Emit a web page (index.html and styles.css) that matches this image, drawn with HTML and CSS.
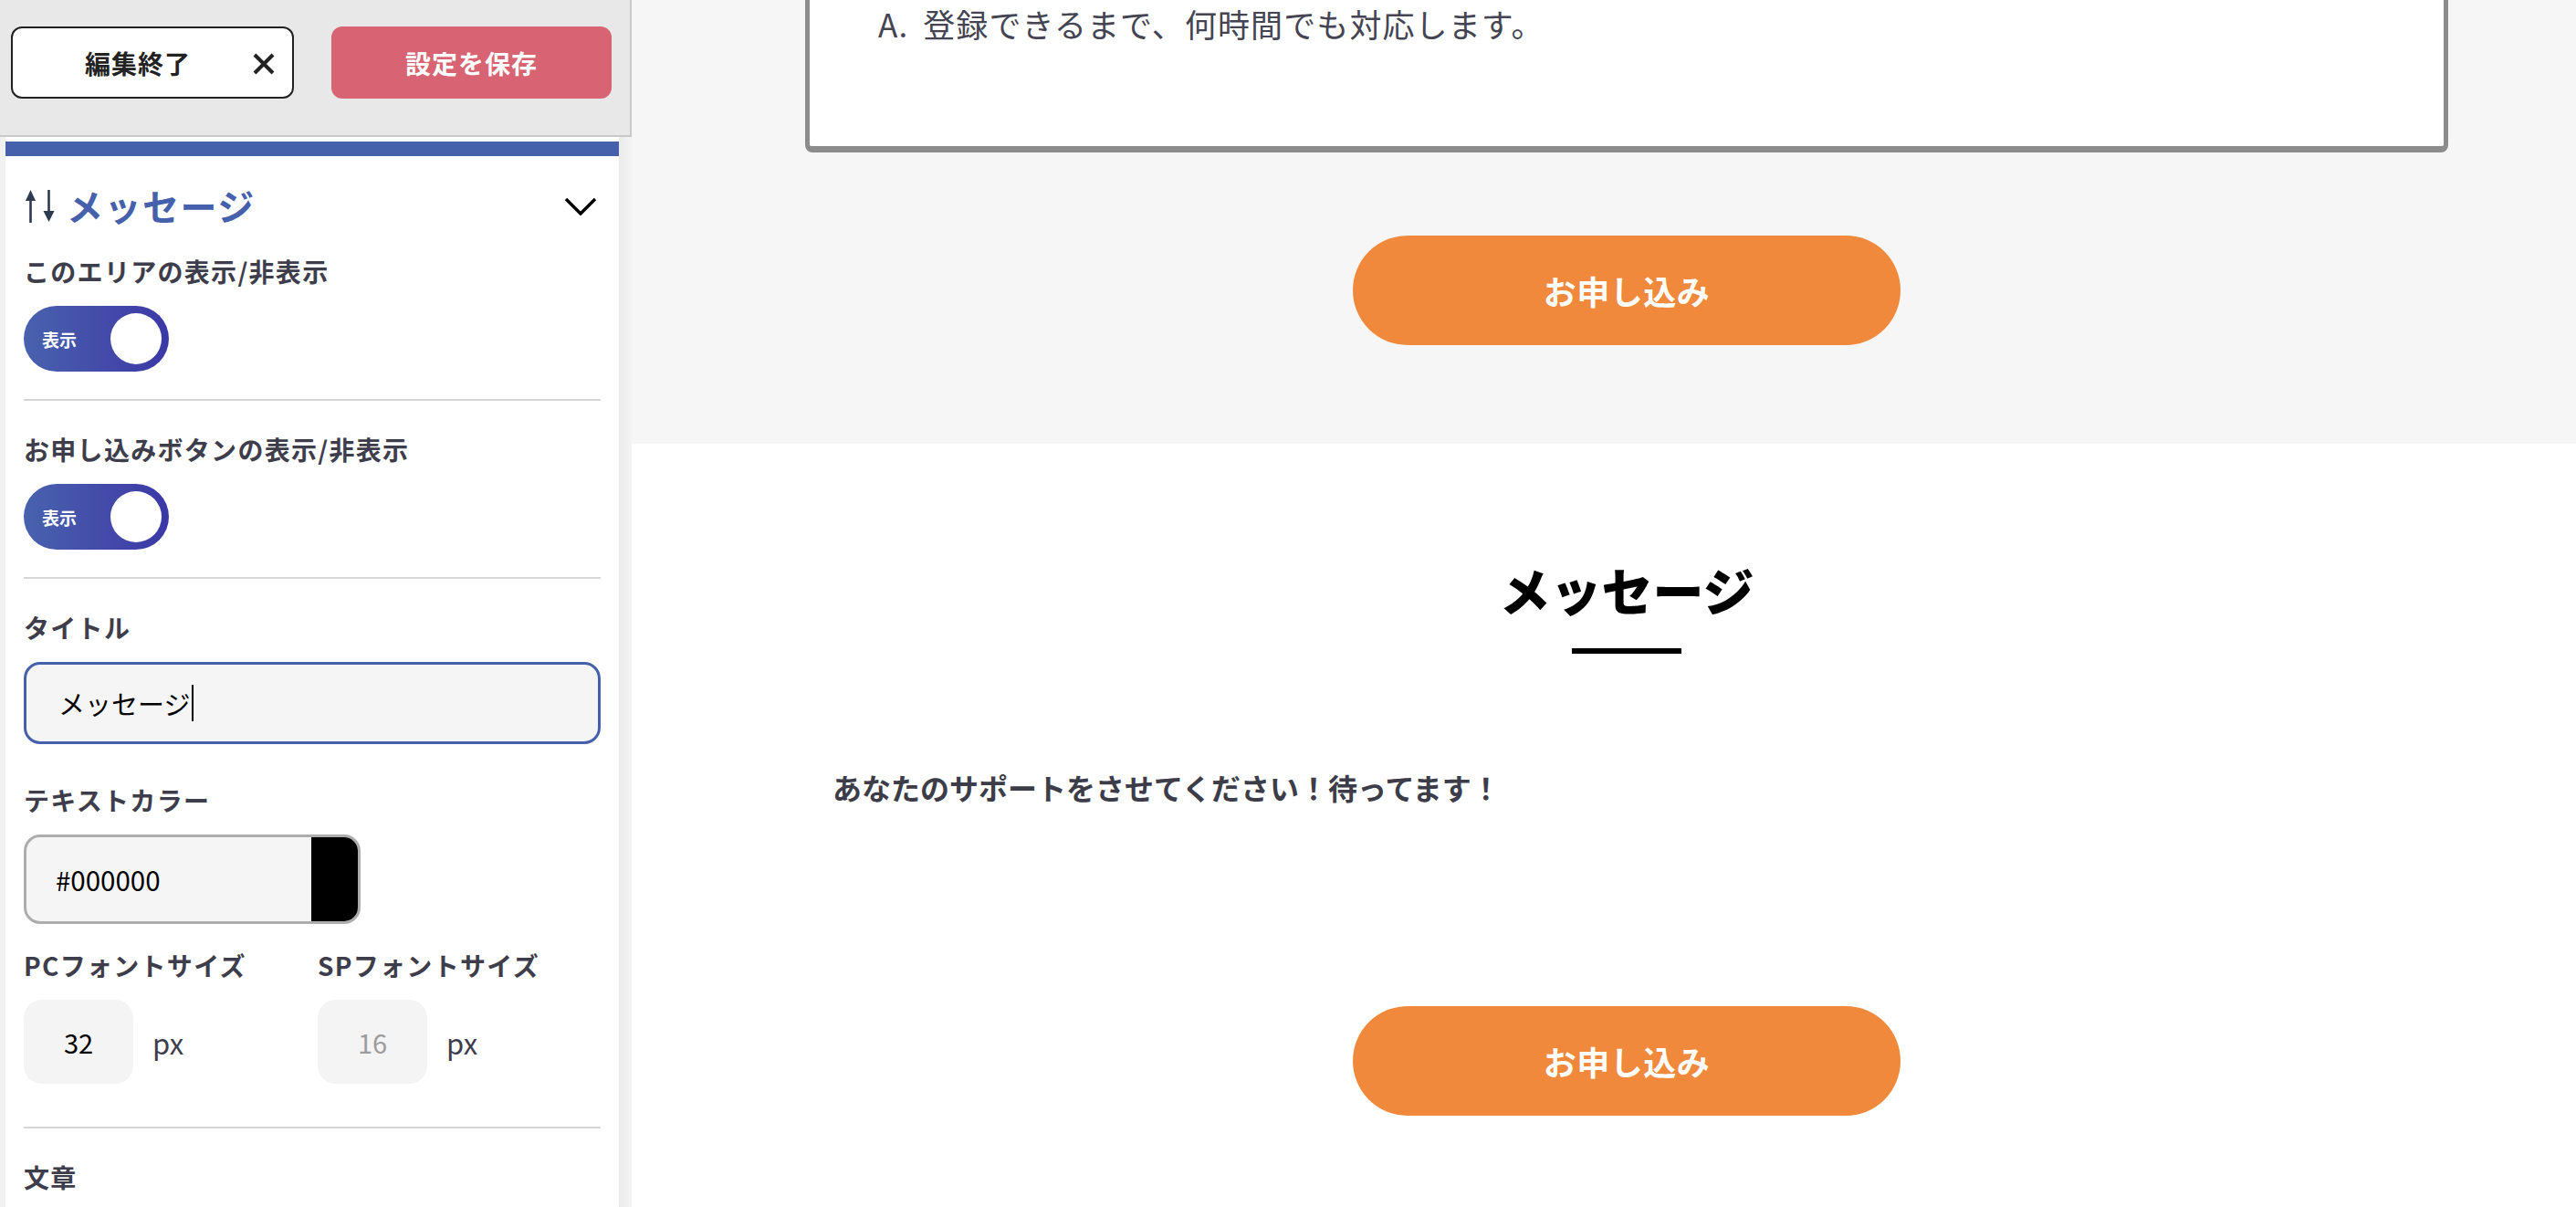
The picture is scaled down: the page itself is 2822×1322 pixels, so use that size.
FILE: index.html
```html
<!DOCTYPE html>
<html lang="ja">
<head>
<meta charset="utf-8">
<title>メッセージ編集</title>
<link rel="stylesheet" href="styles.css">
</head>
<body>
<div class="app">
  <aside class="sidebar">
    <div class="topbar">
      <button class="btn-close" type="button">
        <span>編集終了</span>
        <svg class="close-icon" width="24" height="24" viewBox="0 0 24 24"><path d="M2 2 L22 22 M22 2 L2 22" stroke="#222" stroke-width="4" fill="none"/></svg>
      </button>
      <button class="btn-save" type="button">設定を保存</button>
    </div>
    <div class="panel-wrap">
      <div class="panel">
        <div class="panel-accent"></div>
        <div class="panel-head">
          <div class="panel-title">
            <svg class="sort-icon" width="34" height="36" viewBox="0 0 34 36">
              <polygon points="0,12 5.5,0 11,12" fill="#2d3a4f"/>
              <rect x="4.2" y="10" width="2.6" height="26" fill="#2d3a4f"/>
              <rect x="24.2" y="0" width="2.6" height="25" fill="#2d3a4f"/>
              <polygon points="19.5,23 31.5,23 25.5,35" fill="#2d3a4f"/>
            </svg>
            <span>メッセージ</span>
          </div>
          <svg class="chevron" width="36" height="20" viewBox="0 0 36 20"><polyline points="2,2 18,18 34,2" fill="none" stroke="#000" stroke-width="3.5"/></svg>
        </div>

        <div class="field field-first">
          <div class="label">このエリアの表示/非表示</div>
          <div class="toggle"><span class="toggle-text">表示</span><span class="knob"></span></div>
        </div>
        <div class="divider"></div>

        <div class="field">
          <div class="label">お申し込みボタンの表示/非表示</div>
          <div class="toggle"><span class="toggle-text">表示</span><span class="knob"></span></div>
        </div>
        <div class="divider"></div>

        <div class="field field-title">
          <div class="label">タイトル</div>
          <div class="text-input focused"><span>メッセージ</span><span class="caret"></span></div>
        </div>

        <div class="field field-color">
          <div class="label">テキストカラー</div>
          <div class="color-input"><span class="color-value">#000000</span><span class="swatch"></span></div>
        </div>

        <div class="field field-size">
          <div class="size-grid">
            <div class="size-col">
              <div class="label">PCフォントサイズ</div>
              <div class="size-row"><span class="num-box">32</span><span class="unit">px</span></div>
            </div>
            <div class="size-col">
              <div class="label">SPフォントサイズ</div>
              <div class="size-row"><span class="num-box placeholder">16</span><span class="unit">px</span></div>
            </div>
          </div>
        </div>
        <div class="divider"></div>

        <div class="field">
          <div class="label">文章</div>
        </div>
      </div>
    </div>
  </aside>

  <main class="preview">
    <section class="sec-gray">
      <div class="faq-box">
        <p class="faq-answer"><span class="faq-mark">A.</span>登録できるまで、何時間でも対応します。</p>
      </div>
      <a class="cta">お申し込み</a>
    </section>
    <section class="sec-white">
      <h2 class="msg-title">メッセージ</h2>
      <div class="title-line"></div>
      <p class="msg-body">あなたのサポートをさせてください！待ってます！</p>
      <a class="cta">お申し込み</a>
    </section>
  </main>
</div>
</body>
</html>
```

FILE: styles.css
```css
* { box-sizing: border-box; }

html, body {
  margin: 0;
  padding: 0;
  width: 2822px;
  height: 1322px;
  overflow: hidden;
}

body {
  font-family: "Noto Sans CJK JP", "Noto Sans", sans-serif;
  color: #3e3d4b;
  background: #fff;
}

.app {
  display: flex;
  width: 2822px;
  height: 1322px;
}

/* ---------- Sidebar ---------- */
.sidebar {
  width: 692px;
  flex: none;
  display: flex;
  flex-direction: column;
  background: #f2f2f2;
  height: 1322px;
}

.topbar {
  flex: none;
  height: 150px;
  background: #e8e8e8;
  border-bottom: 2px solid #c9c9c9;
  border-right: 2px solid #c9c9c9;
  display: flex;
  align-items: flex-start;
  padding: 29px 0 0 12px;
  gap: 41px;
}

.btn-close {
  width: 310px;
  height: 79px;
  border: 2px solid #222;
  border-radius: 12px;
  background: #fff;
  display: flex;
  align-items: center;
  padding: 0 0 0 79px;
  gap: 68px;
  font-family: inherit;
  font-size: 28px;
  font-weight: 700;
  letter-spacing: 1px;
  color: #222;
}

.close-icon { flex: none; margin-top: 2px; }

.btn-save {
  width: 307px;
  height: 79px;
  border: 0;
  border-radius: 12px;
  background: #d86473;
  color: #fff;
  font-family: inherit;
  font-size: 28px;
  font-weight: 700;
  letter-spacing: 1px;
  padding: 0;
}

.panel-wrap {
  flex: 1;
  padding: 5px 14px 0 6px;
  overflow: hidden;
  background: linear-gradient(90deg, #f1f1f1 0, #f1f1f1 6px, #fff 6px, #fff 678px, #ebebeb 678px, #f4f4f4 692px);
}

.panel {
  background: #fff;
  height: 100%;
  padding: 0 20px;
}

.panel-accent {
  height: 16px;
  margin: 0 -20px;
  background: #4661ab;
}

.panel-head {
  margin-top: 26px;
  height: 56px;
  display: flex;
  align-items: center;
  justify-content: space-between;
  padding: 0 4px 0 2px;
}

.panel-title {
  display: flex;
  align-items: center;
  gap: 11px;
  font-size: 40px;
  font-weight: 700;
  color: #4661ab;
  letter-spacing: 1.5px;
  line-height: 56px;
}

.sort-icon { flex: none; margin-top: 2px; }
.chevron { flex: none; margin-top: 2px; }

.field { padding: 33px 0 30px; }
.field-first { padding-top: 24px; }
.field-title { padding-bottom: 0; }
.field-color { padding-top: 41px; padding-bottom: 0; }
.field-size { padding-top: 25px; padding-bottom: 47px; }

.label {
  font-size: 28px;
  line-height: 40px;
  font-weight: 700;
  letter-spacing: 1.3px;
  color: #3e3d4b;
}

.toggle {
  margin-top: 18px;
  width: 159px;
  height: 72px;
  border-radius: 36px;
  background: linear-gradient(90deg, #4862ad 0%, #4349a9 60%, #3b38a6 100%);
  display: flex;
  align-items: center;
  justify-content: space-between;
  padding: 0 8px 0 20px;
}

.toggle-text {
  color: #fff;
  font-size: 19px;
  font-weight: 700;
  line-height: 1;
}

.knob {
  width: 56px;
  height: 56px;
  border-radius: 50%;
  background: #fff;
}

.divider {
  height: 2px;
  background: #d6d6d6;
}

.text-input {
  margin-top: 18px;
  width: 632px;
  height: 90px;
  border: 3px solid #4661ab;
  border-radius: 18px;
  background: #f5f5f5;
  display: flex;
  align-items: center;
  padding-left: 35px;
  font-size: 29px;
  color: #000;
}

.caret {
  display: inline-block;
  width: 2px;
  height: 40px;
  background: #000;
  margin-left: 2px;
}

.color-input {
  margin-top: 18px;
  width: 369px;
  height: 98px;
  border: 3px solid #adadad;
  border-radius: 18px;
  background: #f5f5f5;
  display: flex;
  overflow: hidden;
}

.color-value {
  flex: 1;
  display: flex;
  align-items: center;
  padding-left: 32px;
  font-size: 29.5px;
  color: #000;
}

.swatch {
  width: 51px;
  background: #000;
}

.size-grid {
  display: grid;
  grid-template-columns: 322px 1fr;
}

.size-row {
  margin-top: 18px;
  display: flex;
  align-items: center;
}

.num-box {
  width: 120px;
  height: 92px;
  border-radius: 20px;
  background: #f4f4f4;
  display: flex;
  align-items: center;
  justify-content: center;
  font-size: 29px;
  color: #000;
}

.num-box.placeholder { color: #9c9c9c; }

.unit {
  margin-left: 21px;
  font-size: 31px;
  color: #3e3d4b;
}

/* ---------- Preview ---------- */
.preview {
  flex: 1;
  display: flex;
  flex-direction: column;
  min-width: 0;
}

.sec-gray {
  height: 486px;
  flex: none;
  background: #f6f6f6;
  padding-left: 50px;
  display: flex;
  flex-direction: column;
  align-items: center;
}

.faq-box {
  width: 1800px;
  background: #fff;
  border: 5px solid #8c8c8c;
  border-top: 0;
  border-bottom-width: 7px;
  border-radius: 0 0 8px 8px;
  padding: 2px 0 110px 75px;
}

.faq-answer {
  margin: 0;
  font-size: 35px;
  line-height: 48px;
  letter-spacing: 1.1px;
  color: #444452;
}

.faq-mark { margin-right: 16px; }

.cta {
  display: flex;
  align-items: center;
  justify-content: center;
  width: 600px;
  height: 120px;
  border-radius: 60px;
  background: #f0893b;
  color: #fff;
  font-size: 36px;
  font-weight: 700;
  letter-spacing: 0.5px;
  flex: none;
}

.sec-gray .cta { margin-top: 91px; }

.sec-white {
  flex: 1;
  background: #fff;
  padding: 119px 0 0 50px;
  display: flex;
  flex-direction: column;
  align-items: center;
}

.msg-title {
  margin: 0;
  font-size: 56px;
  line-height: 80px;
  font-weight: 900;
  color: #000;
}

.title-line {
  margin-top: 25px;
  width: 120px;
  height: 6px;
  background: #000;
}

.msg-body {
  width: 1740px;
  margin: 122px 0 0;
  font-size: 32px;
  line-height: 48px;
  font-weight: 700;
  color: #3d3d4a;
}

.sec-white .cta { margin-top: 216px; }
```
